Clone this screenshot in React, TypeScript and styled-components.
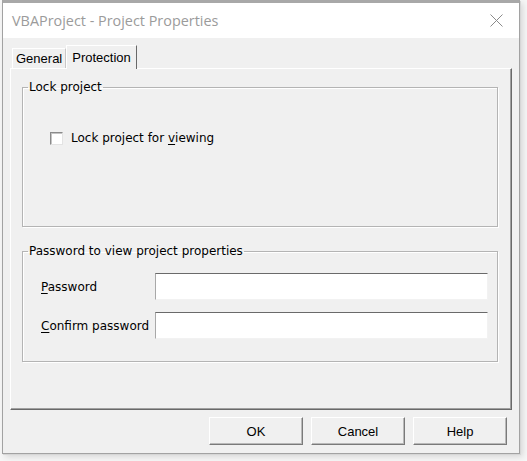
import React from "react";
import styled, { createGlobalStyle } from "styled-components";

const GlobalStyle = createGlobalStyle`
  html, body {
    margin: 0;
    padding: 0;
    background: #f6f6f6;
  }
  body {
    font-family: "DejaVu Sans", "Liberation Sans", sans-serif;
  }
`;

const Page = styled.div`
  width: 527px;
  height: 461px;
  overflow: hidden;
`;

const Window = styled.div`
  box-sizing: border-box;
  margin-left: 2px;
  width: 518px;
  height: 454px;
  border: 1px solid #a2a2a2;
  border-top: 3px solid #a8a8a8;
  background: #f0f0f0;
  box-shadow: 1px 1px 0 #d6d6d6, 3px 3px 6px rgba(0, 0, 0, 0.12);
  display: flex;
  flex-direction: column;
`;

const TitleBar = styled.div`
  height: 35px;
  background: #ffffff;
  display: flex;
  align-items: center;
  justify-content: space-between;
  padding-left: 9px;
`;

const Title = styled.span`
  font-family: "Open Sans", "Noto Sans", sans-serif;
  font-size: 14.4px;
  color: #9b9b9b;
`;

const CloseButton = styled.div`
  width: 46px;
  height: 35px;
  display: flex;
  align-items: center;
  justify-content: center;
`;

const Body = styled.div`
  flex: 1;
  padding: 7px 7px 8px 7px;
  display: flex;
  flex-direction: column;
`;

const TabStrip = styled.div`
  height: 23px;
  display: flex;
  align-items: flex-end;
`;

const Tab = styled.div<{ $active?: boolean }>`
  box-sizing: border-box;
  position: relative;
  height: ${(p) => (p.$active ? "24px" : "20px")};
  margin-left: ${(p) => (p.$active ? "0" : "2px")};
  margin-bottom: ${(p) => (p.$active ? "-1px" : "0")};
  padding: ${(p) => (p.$active ? "0 5px 1px 5px" : "0 3px")};
  display: flex;
  align-items: center;
  font-family: "Liberation Sans", Arial, sans-serif;
  font-size: 13px;
  color: #000;
  background: #f0f0f0;
  border-top: 1px solid #ffffff;
  border-left: 1px solid #ffffff;
  border-right: 1px solid ${(p) => (p.$active ? "#696969" : "#c8c8c8")};
  z-index: ${(p) => (p.$active ? 1 : 0)};
`;

const Panel = styled.div`
  box-sizing: border-box;
  height: 342px;
  padding: 11px 11px 0 11px;
  border-top: 1px solid #ffffff;
  border-left: 1px solid #ffffff;
  border-right: 1px solid #696969;
  border-bottom: 1px solid #696969;
  box-shadow: inset -1px -1px 0 #a0a0a0;
`;

const Group = styled.fieldset<{ $gap?: number }>`
  margin: ${(p) => p.$gap ?? 0}px 2px 0 0;
  padding: 0 0 0 5px;
  min-inline-size: 0;
  border: 1px solid #b4b4b4;
  box-shadow: 1px 1px 0 #ffffff, inset 1px 1px 0 #ffffff;
`;

const Legend = styled.legend`
  padding: 0 1px;
  font-size: 12px;
  line-height: 14px;
  color: #000;
`;

const LockContent = styled.div`
  padding: 36px 0 80px 22px;
`;

const CheckRow = styled.label`
  display: flex;
  align-items: center;
  gap: 8px;
  height: 16px;
  font-size: 12px;
  color: #000;
`;

const CheckBox = styled.span`
  box-sizing: border-box;
  width: 13px;
  height: 13px;
  background: #ffffff;
  border: 1px solid;
  border-color: #8a8a8a #e3e3e3 #e3e3e3 #8a8a8a;
  box-shadow: inset 1px 1px 0 #c4c4c4;
`;

const PasswordContent = styled.div`
  padding: 15px 9px 22px 13px;
  display: grid;
  grid-template-columns: 114px 1fr;
  row-gap: 12px;
  align-items: center;
`;

const FieldLabel = styled.span`
  font-size: 12px;
  color: #000;
`;

const TextBox = styled.div`
  box-sizing: border-box;
  height: 27px;
  background: #ffffff;
  border-top: 1px solid #6a6a6a;
  border-left: 1px solid #a8a8a8;
  border-right: 1px solid #f2f2f2;
  border-bottom: 1px solid #f2f2f2;
`;

const AccessKey = styled.u`
  text-decoration: underline;
  text-underline-offset: 2px;
`;

const ButtonRow = styled.div`
  display: flex;
  justify-content: flex-end;
  gap: 8px;
  margin-top: 7px;
  padding-right: 5px;
`;

const DialogButton = styled.div`
  box-sizing: border-box;
  width: 94px;
  height: 28px;
  display: flex;
  align-items: center;
  justify-content: center;
  font-family: "Liberation Sans", Arial, sans-serif;
  font-size: 13px;
  color: #000;
  background: #f0f0f0;
  border-top: 1px solid #ffffff;
  border-left: 1px solid #ffffff;
  border-right: 1px solid #7a7a7a;
  border-bottom: 1px solid #7a7a7a;
  box-shadow: inset -1px -1px 0 #b9b9b9;
`;

const App: React.FC = (): JSX.Element => {
  return (
    <Page>
      <GlobalStyle />
      <Window>
        <TitleBar>
          <Title>VBAProject - Project Properties</Title>
          <CloseButton>
            <svg width="13" height="13" viewBox="0 0 13 13">
              <path d="M0.5 0.5 L12.5 12.5 M12.5 0.5 L0.5 12.5" stroke="#8a8a8a" strokeWidth="1" fill="none" />
            </svg>
          </CloseButton>
        </TitleBar>
        <Body>
          <TabStrip>
            <Tab>General</Tab>
            <Tab $active>Protection</Tab>
          </TabStrip>
          <Panel>
            <Group>
              <Legend>Lock project</Legend>
              <LockContent>
                <CheckRow>
                  <CheckBox />
                  <span>
                    Lock project for <AccessKey>v</AccessKey>iewing
                  </span>
                </CheckRow>
              </LockContent>
            </Group>
            <Group $gap={17}>
              <Legend>Password to view project properties</Legend>
              <PasswordContent>
                <FieldLabel>
                  <AccessKey>P</AccessKey>assword
                </FieldLabel>
                <TextBox />
                <FieldLabel>
                  <AccessKey>C</AccessKey>onfirm password
                </FieldLabel>
                <TextBox />
              </PasswordContent>
            </Group>
          </Panel>
          <ButtonRow>
            <DialogButton>OK</DialogButton>
            <DialogButton>Cancel</DialogButton>
            <DialogButton>Help</DialogButton>
          </ButtonRow>
        </Body>
      </Window>
    </Page>
  );
};

export default App;
